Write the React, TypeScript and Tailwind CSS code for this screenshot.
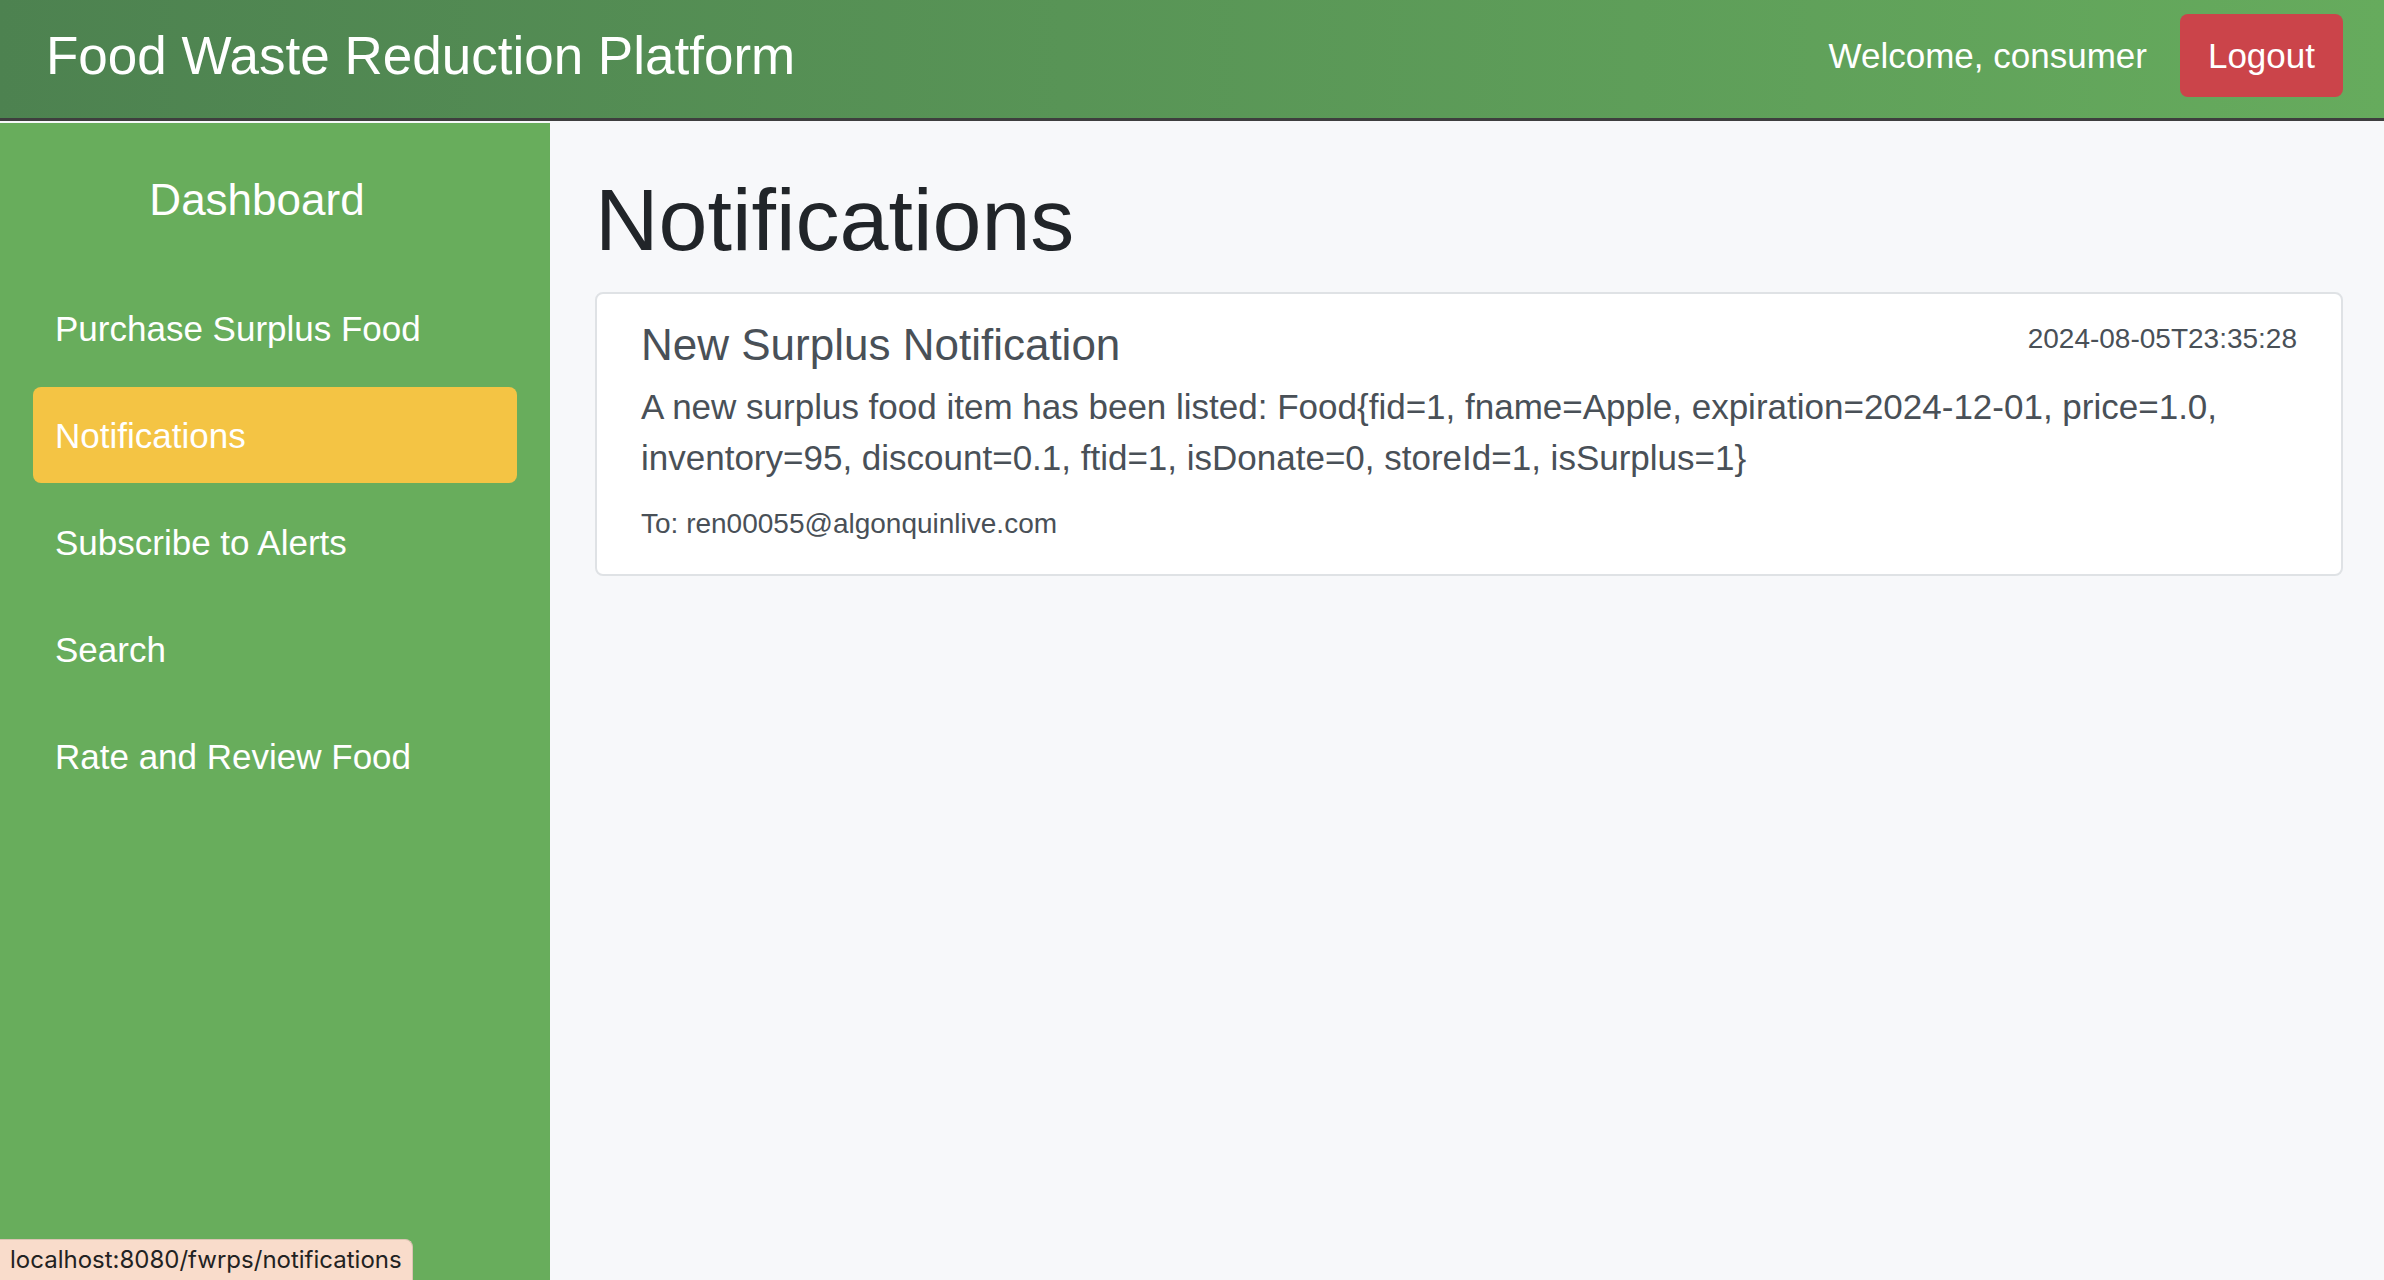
const navItems = [
  "Purchase Surplus Food",
  "Notifications",
  "Subscribe to Alerts",
  "Search",
  "Rate and Review Food",
];

const Header = () => (
  <header className="h-[121px] shrink-0 flex items-center justify-between pl-[46px] pr-[41px] pb-[7px] border-b-[3px] border-[#3e3e3e] bg-linear-to-r from-[#4d8250] to-[#66ab5d]">
    <h1 className="text-[53px] leading-none text-white">Food Waste Reduction Platform</h1>
    <div className="flex items-center gap-[33px]">
      <span className="text-[35px] leading-none text-white">Welcome, consumer</span>
      <button className="h-[83px] px-[28px] rounded-[8px] bg-[#cb444a] text-[35px] leading-none text-white">
        Logout
      </button>
    </div>
  </header>
);

const Sidebar = () => (
  <aside className="w-[550px] shrink-0 bg-[#68ad5c] pt-[55px]">
    <h2 className="pr-[36px] text-center text-[44px] leading-none text-white">Dashboard</h2>
    <nav className="mt-[58px] flex flex-col gap-[11px] px-[33px]">
      {navItems.map((item) => (
        <a
          key={item}
          href="#"
          className={
            item === "Notifications"
              ? "h-[96px] flex items-center px-[22px] rounded-[8px] bg-[#f4c444] text-[35px] leading-none text-white"
              : "h-[96px] flex items-center px-[22px] rounded-[8px] text-[35px] leading-none text-white"
          }
        >
          {item}
        </a>
      ))}
    </nav>
  </aside>
);

const NotificationCard = () => (
  <div className="mt-[28px] rounded-[8px] border-2 border-[#dfe2e5] bg-white px-[44px] pt-[29px] pb-[36px] text-[#495057]">
    <div className="flex items-start justify-between">
      <h5 className="text-[44px] leading-none">New Surplus Notification</h5>
      {/* timestamp */}
      <small className="pt-[2px] text-[28px] leading-none">2024-08-05T23:35:28</small>
    </div>
    <p className="mt-[14px] text-[35px] leading-[51px]">
      A new surplus food item has been listed: Food{"{"}fid=1, fname=Apple, expiration=2024-12-01, price=1.0,
      inventory=95, discount=0.1, ftid=1, isDonate=0, storeId=1, isSurplus=1{"}"}
    </p>
    <p className="mt-[27px] text-[28px] leading-none">To: ren00055@algonquinlive.com</p>
  </div>
);

export default function App() {
  return (
    <div className="relative flex h-screen w-full flex-col overflow-hidden bg-[#f7f8fa] font-['Liberation_Sans',Arial,sans-serif]">
      <Header />
      <div className="mt-[2px] flex flex-1">
        <Sidebar />
        <main className="flex-1 pl-[45px] pr-[41px] pt-[53px]">
          <h1 className="text-[88px] leading-none text-[#212529]">Notifications</h1>
          <NotificationCard />
        </main>
      </div>
      {/* browser link preview */}
      <div className="absolute bottom-0 left-0 h-[41px] w-[413px] flex items-center pl-[10px] rounded-tr-[8px] border-t border-r border-[#dcc3b3] bg-[#f9dccb] font-['Inter',sans-serif] text-[24px] leading-none text-[#222]">
        localhost:8080/fwrps/notifications
      </div>
    </div>
  );
}
